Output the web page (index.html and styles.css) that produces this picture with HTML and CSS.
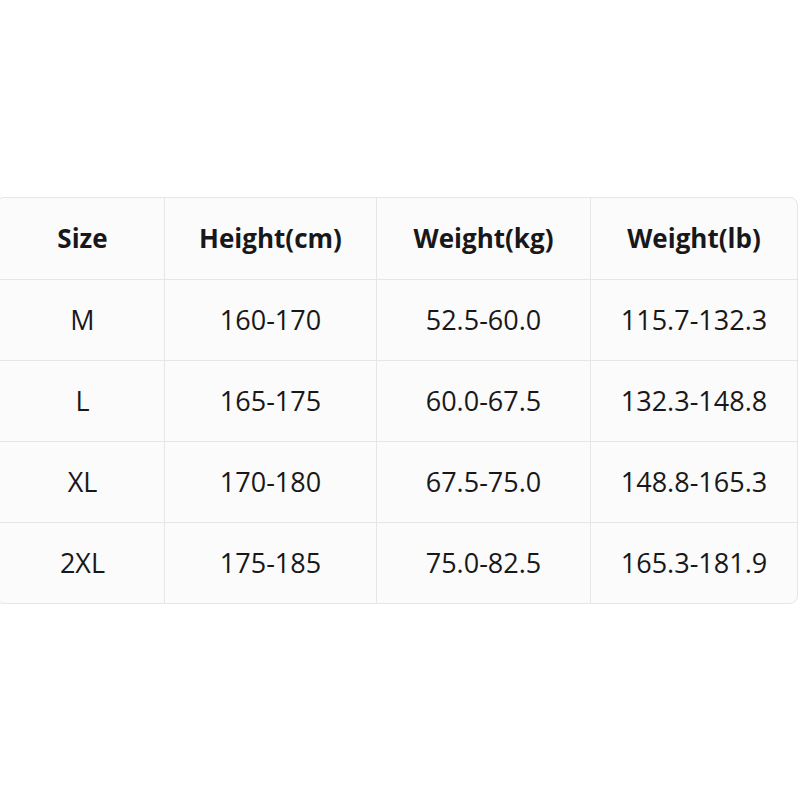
FILE: index.html
```html
<!DOCTYPE html>
<html>
<head>
<meta charset="utf-8">
<link rel="stylesheet" href="styles.css">
</head>
<body>
<div class="page">
  <div class="table">
    <div class="cell head">Size</div>
    <div class="cell head">Height(cm)</div>
    <div class="cell head">Weight(kg)</div>
    <div class="cell head last">Weight(lb)</div>

    <div class="cell">M</div>
    <div class="cell">160-170</div>
    <div class="cell">52.5-60.0</div>
    <div class="cell last">115.7-132.3</div>

    <div class="cell">L</div>
    <div class="cell">165-175</div>
    <div class="cell">60.0-67.5</div>
    <div class="cell last">132.3-148.8</div>

    <div class="cell">XL</div>
    <div class="cell">170-180</div>
    <div class="cell">67.5-75.0</div>
    <div class="cell last">148.8-165.3</div>

    <div class="cell bottom">2XL</div>
    <div class="cell bottom">175-185</div>
    <div class="cell bottom">75.0-82.5</div>
    <div class="cell bottom last">165.3-181.9</div>
  </div>
</div>
</body>
</html>
```
FILE: styles.css
```css
html, body {
  margin: 0;
  padding: 0;
  background: #ffffff;
}
body {
  width: 800px;
  height: 800px;
  overflow: hidden;
}
.page {
  padding-top: 197px;
}
.table {
  margin-left: -4px;
  width: 802px;
  box-sizing: border-box;
  display: grid;
  grid-template-columns: 168px 212px 214px 206px;
  grid-template-rows: 82px 81px 81px 81px 80px;
  border: 1px solid #e6e6e6;
  border-radius: 8px;
  background: #fbfbfb;
  overflow: hidden;
  font-family: "Open Sans", "Liberation Sans", sans-serif;
  font-size: 27px;
  color: #18181a;
}
.cell {
  display: flex;
  align-items: center;
  justify-content: center;
  padding-bottom: 2px;
  border-right: 1px solid #e6e6e6;
  border-bottom: 1px solid #e6e6e6;
  white-space: nowrap;
}
.cell.head {
  font-weight: 700;
  font-size: 26px;
}
.cell.last {
  border-right: none;
}
.cell.bottom {
  border-bottom: none;
}
.cell:nth-child(4n+1) {
  padding-left: 4px;
}
```
